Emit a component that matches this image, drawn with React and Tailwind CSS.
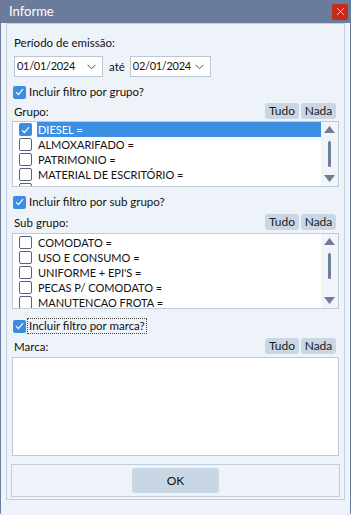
import { X } from 'lucide-react';

function Check({ checked }) {
  return checked ? (
    <span className="w-[13px] h-[13px] shrink-0 rounded-[2px] bg-[#3b8de4] flex items-center justify-center">
      <svg width="9" height="8" viewBox="0 0 9 8" fill="none">
        <path d="M1 4.2 L3.4 6.6 L8 1.2" stroke="white" strokeWidth="1.2" />
      </svg>
    </span>
  ) : (
    <span className="w-[13px] h-[13px] shrink-0 rounded-[2px] border border-[#56647c] bg-white" />
  );
}

function SmallButtons() {
  return (
    <div className="flex gap-[2px]">
      <button className="w-[34px] h-[16px] rounded-[3px] bg-[#c9d6e3] text-[12px] leading-[16px] text-[#1c1c1c]">Tudo</button>
      <button className="w-[35px] h-[16px] rounded-[3px] bg-[#c9d6e3] text-[12px] leading-[16px] text-[#1c1c1c]">Nada</button>
    </div>
  );
}

function Scrollbar() {
  return (
    <div className="w-[17px] shrink-0 bg-[#f1f4f8] flex flex-col items-center justify-between py-[4px]">
      <svg width="11" height="7" viewBox="0 0 11 7"><path d="M5.5 0 L11 7 L0 7 Z" fill="#6e7e98" /></svg>
      <div className="flex-1 flex flex-col items-center pt-[8px]">
        <div className="w-[3px] h-[26px] rounded-full bg-[#6e7e98]" />
      </div>
      <svg width="11" height="7" viewBox="0 0 11 7"><path d="M0 0 L11 0 L5.5 7 Z" fill="#6e7e98" /></svg>
    </div>
  );
}

function CheckList({ items, selected, height, padTop }) {
  return (
    <div className={`ml-[5px] mr-[5px] border border-[#bfcad9] bg-white flex overflow-hidden ${height}`}>
      <div className={`flex-1 flex flex-col overflow-hidden ${padTop}`}>
        {items.map((it, i) => (
          <div key={i} className="h-[15px] shrink-0 flex items-center pl-[6px]">
            <Check checked={i === selected} />
            <span
              className={`ml-[5px] h-[15px] flex-1 pl-[1px] flex items-center text-[11px] leading-[15px] ${
                i === selected ? 'bg-[#3d8fe1] text-white' : 'text-[#111]'
              }`}
            >
              {it}
            </span>
          </div>
        ))}
      </div>
      <Scrollbar />
    </div>
  );
}

function DateBox({ value, width }) {
  return (
    <div className={`${width} h-[21px] bg-white border border-[#bcc7d6] flex items-center justify-between pl-[2px] pr-[6px]`}>
      <span className="text-[11px] tracking-[-0.3px]">{value}</span>
      <svg width="9" height="6" viewBox="0 0 9 6"><path d="M0.5 0.8 L4.5 4.8 L8.5 0.8" stroke="#555" fill="none" /></svg>
    </div>
  );
}

export default function App() {
  const grupos = ['DIESEL =', 'ALMOXARIFADO =', 'PATRIMONIO =', 'MATERIAL DE ESCRITÓRIO =', ''];
  const subGrupos = ['COMODATO =', 'USO E CONSUMO =', "UNIFORME + EPI'S =", 'PECAS P/ COMODATO =', 'MANUTENCAO FROTA ='];

  return (
    <div className="w-[351px] h-[515px] bg-[#6b7b9a] flex flex-col font-['Lato',sans-serif] rounded-b-[3px] overflow-hidden">
      <div className="h-[23px] shrink-0 flex items-center justify-between pl-[9px] pr-[3px]">
        <span className="text-[13px] text-white">Informe</span>
        <span className="w-[16px] h-[16px] bg-[#c42b1c] flex items-center justify-center rounded-[2px]">
          <X size={13} color="white" strokeWidth={1.4} />
        </span>
      </div>
      <div className="flex-1 mx-[1px] mb-[1px] bg-[#eef3fa] pl-[5px] pr-[5px] pb-[16px] flex flex-col">
        <div className="flex-1 border border-[#c3cedc] flex flex-col text-[#111] text-[11.5px]">
          <div className="mt-[11px] ml-[7px] leading-[16px]">Período de emissão:</div>
          <div className="mt-[5px] ml-[7px] flex items-center">
            <DateBox value="01/01/2024" width="w-[89px]" />
            <span className="ml-[6px] mr-[5px]">até</span>
            <DateBox value="02/01/2024" width="w-[81px]" />
          </div>
          <label className="mt-[8px] ml-[6px] flex items-center h-[14px]">
            <Check checked />
            <span className="ml-[3px]">Incluir filtro por grupo?</span>
          </label>
          <div className="mt-[3px] ml-[7px] mr-[8px] flex items-end justify-between h-[17px]">
            <span className="leading-[14px]">Grupo:</span>
            <SmallButtons />
          </div>
          <div className="mt-[2px]">
            <CheckList items={grupos} selected={0} height="h-[66px]" padTop="" />
          </div>
          <label className="mt-[8px] ml-[6px] flex items-center h-[14px]">
            <Check checked />
            <span className="ml-[3px]">Incluir filtro por sub grupo?</span>
          </label>
          <div className="mt-[4px] ml-[7px] mr-[8px] flex items-end justify-between h-[17px]">
            <span className="leading-[14px]">Sub grupo:</span>
            <SmallButtons />
          </div>
          <div className="mt-[3px]">
            <CheckList items={subGrupos} selected={-1} height="h-[76px]" padTop="pt-[1px]" />
          </div>
          <label className="mt-[10px] ml-[6px] flex items-center h-[14px]">
            <Check checked />
            <span className="ml-[2px] px-[1px] leading-[14px] outline outline-1 outline-dotted outline-[#444]">Incluir filtro por marca?</span>
          </label>
          <div className="mt-[4px] ml-[7px] mr-[8px] flex items-end justify-between h-[17px]">
            <span className="leading-[14px]">Marca:</span>
            <SmallButtons />
          </div>
          <div className="mt-[3px] ml-[5px] mr-[5px] h-[99px] border border-[#bfcad9] bg-white" />
          <div className="mt-[8px] ml-[4px] mr-[4px] h-[33px] border border-[#c3cedc] flex items-center justify-center">
            <button className="w-[87px] h-[25px] rounded-[3px] bg-[#c9d6e3] text-[12px] text-[#111]">OK</button>
          </div>
          <div className="h-[2px]" />
        </div>
      </div>
    </div>
  );
}
